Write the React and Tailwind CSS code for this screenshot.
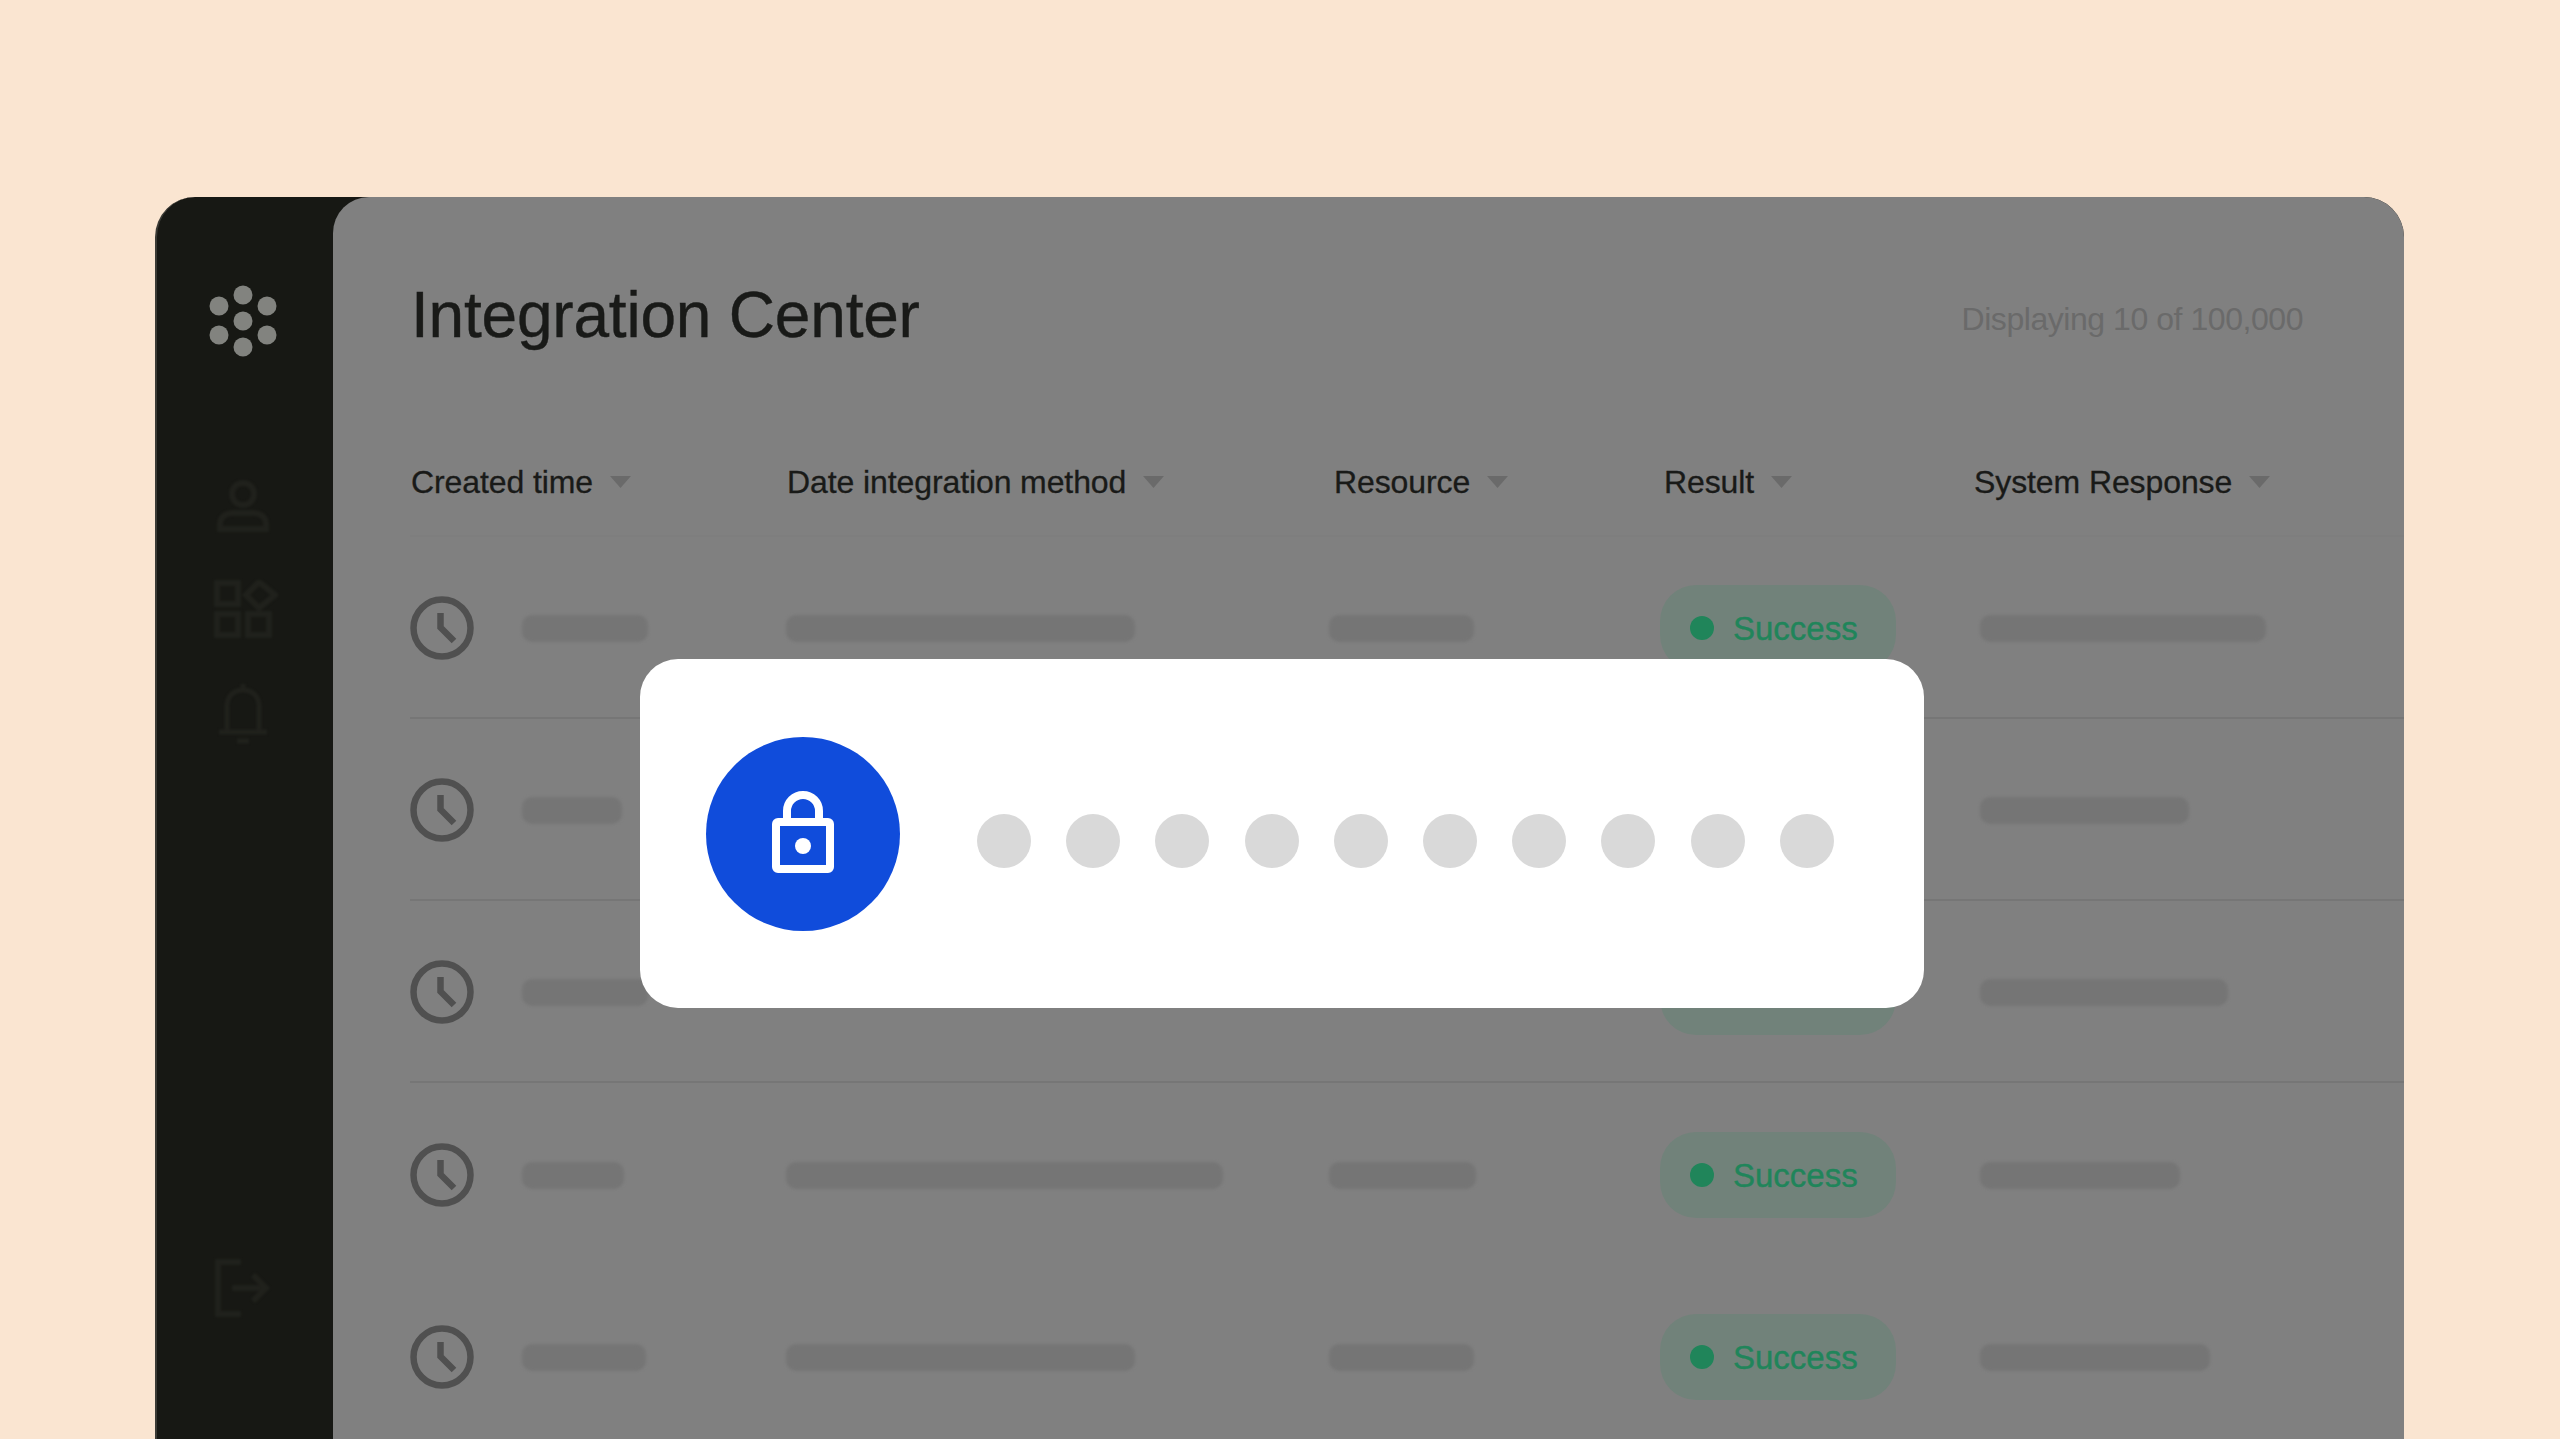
const rows = [
  { a: 126, b: 349, c: 145, e: 286, div: true },
  { a: 100, b: 349, c: 145, e: 209, div: true },
  { a: 126, b: 349, c: 145, e: 248, div: true },
  { a: 102, b: 437, c: 147, e: 200, div: false },
  { a: 124, b: 349, c: 145, e: 230, div: false },
];
const heads = [
  ["Created time", "pl-0"],
  ["Date integration method", "pl-0"],
  ["Resource", "pl-[4px]"],
  ["Result", "pl-[3px]"],
  ["System Response", "pl-0"],
];

function Clock() {
  return (
    <svg width="64" height="64" viewBox="0 0 64 64" fill="none" stroke="#505050" strokeWidth="6.5">
      <circle cx="32" cy="32" r="28.5" />
      <path d="M30.5 17V31.5L44 45" />
    </svg>
  );
}
function Caret() {
  return (
    <svg className="blur-[0.6px]" width="21" height="12" viewBox="0 0 21 12" fill="#6a6a6a">
      <path d="M0 0H21L10.5 12Z" />
    </svg>
  );
}
function Bar({ w }) {
  return <div className="h-[27px] rounded-[10px] bg-[#757575] blur-[1.5px]" style={{ width: w }} />;
}
function Badge() {
  return (
    <div className="flex h-[86px] w-[236px] items-center gap-[19px] rounded-[36px] bg-[#71827a] pl-[30px]">
      <div className="h-[24px] w-[24px] rounded-full bg-[#20855a]" />
      <span className="text-[33px] leading-none text-[#20855a] [-webkit-text-stroke:0.4px_#20855a]">Success</span>
    </div>
  );
}

export default function App() {
  return (
    <div className="relative h-[1439px] w-full overflow-hidden bg-[#fae5d1] pl-[155px] pr-[156px] pt-[197px] font-['Liberation_Sans',sans-serif]">
      <div className="flex h-[1242px] overflow-hidden rounded-t-[40px] border-l-2 border-[#3a3a35] bg-[#171814]">
        <aside className="flex w-[176px] shrink-0 flex-col items-center pr-[4px]">
          <svg className="mt-[88px]" width="68" height="72" viewBox="0 0 68 72" fill="#82837f">
            <circle cx="34" cy="10" r="9.5" />
            <circle cx="10" cy="21" r="9.5" />
            <circle cx="58" cy="21" r="9.5" />
            <circle cx="34" cy="36" r="9.5" />
            <circle cx="10" cy="50" r="9.5" />
            <circle cx="58" cy="50" r="9.5" />
            <circle cx="34" cy="62" r="9.5" />
          </svg>
          <svg className="mt-[123px] blur-[1px]" width="52" height="52" viewBox="0 0 52 52" fill="none" stroke="#20211c" strokeWidth="6">
            <circle cx="26" cy="14" r="11" />
            <path d="M3 49V44C3 37 9 33 16 33H36C43 33 49 37 49 44V49Z" />
          </svg>
          <svg className="ml-[6px] mt-[48px] blur-[1px]" width="64" height="58" viewBox="0 0 64 58" fill="none" stroke="#20211c" strokeWidth="6">
            <rect x="3" y="3" width="21" height="21" />
            <rect x="3" y="34" width="21" height="21" />
            <rect x="34" y="34" width="21" height="21" />
            <path d="M45 2L61 15L45 28L32 15Z" />
          </svg>
          <svg className="mt-[46px] blur-[1px]" width="52" height="60" viewBox="0 0 52 60" fill="none" stroke="#20211c" strokeWidth="5">
            <path d="M10 48V22C10 12 17 6 26 6C35 6 42 12 42 22V48" />
            <path d="M2 48H50" />
            <path d="M26 0V6" />
            <path d="M20 57H32" />
          </svg>
          <svg className="ml-[-2px] mt-[515px] blur-[1px]" width="56" height="58" viewBox="0 0 56 58" fill="none" stroke="#20211c" strokeWidth="6">
            <path d="M27 3H4V55H27" />
            <path d="M18 29H50" />
            <path d="M39 16L52 29L39 42" />
          </svg>
        </aside>

        <main className="min-w-0 flex-1 rounded-tl-[36px] bg-[#808080] pl-[78px] pt-[82px]">
          <div className="flex items-center justify-between pr-[101px]">
            <h1 className="text-[64px] font-normal leading-[72px] tracking-[-0.2px] text-[#191a18] [-webkit-text-stroke:0.4px_#191a18]">Integration Center</h1>
            <span className="mt-[8px] text-[32px] leading-[40px] tracking-[-0.45px] text-[#6a6a6a]">Displaying 10 of 100,000</span>
          </div>
          <div className="mt-[111px] grid grid-cols-[376px_543px_331px_313px_1fr]">
            {heads.map(([label, pad]) => (
              <div key={label} className={`flex items-center gap-[17px] ${pad}`}>
                <span className="text-[32px] leading-[40px] tracking-[-0.1px] text-[#191a18] [-webkit-text-stroke:0.3px_#191a18]">{label}</span>
                <Caret />
              </div>
            ))}
          </div>
          <div className="ml-[-1px] mt-[33px] border-t-2 border-[#7e7e7e]">
            {rows.map((r, i) => (
              <div
                key={i}
                className={`grid h-[182px] grid-cols-[376px_543px_331px_313px_1fr] items-center pt-[2px] ${r.div ? "border-b-2 border-[#767676]" : ""}`}
              >
                <div className="flex items-center gap-[48px]">
                  <Clock />
                  <Bar w={r.a} />
                </div>
                <Bar w={r.b} />
                <Bar w={r.c} />
                <Badge />
                <div className="pl-[7px]">
                  <Bar w={r.e} />
                </div>
              </div>
            ))}
          </div>
        </main>
      </div>

      <div className="absolute left-[640px] top-[659px] flex h-[349px] w-[1284px] items-center rounded-[38px] bg-white pl-[66px]">
        <div className="flex h-[194px] w-[194px] items-center justify-center rounded-full bg-[#104cdb]">
          <svg className="mb-[4px]" width="62" height="82" viewBox="0 0 62 82" fill="none" stroke="white" strokeWidth="8">
            <path d="M15 31V20A16 16 0 0 1 47 20V31" />
            <rect x="4" y="31" width="54" height="47" rx="2" />
            <circle cx="31" cy="55" r="8" fill="white" stroke="none" />
          </svg>
        </div>
        <div className="ml-[77px] mt-[14px] flex gap-[35.2px]">
          {Array.from({ length: 10 }).map((_, i) => (
            <div key={i} className="h-[54px] w-[54px] rounded-full bg-[#d9d9d9]" />
          ))}
        </div>
      </div>
    </div>
  );
}
